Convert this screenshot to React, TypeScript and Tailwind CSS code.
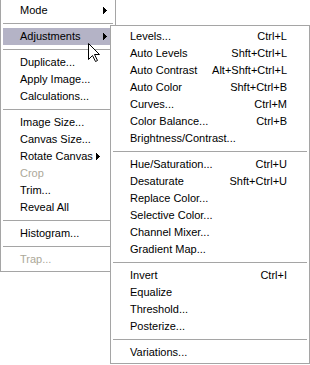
import React from "react";

type Item =
  | { sep: true }
  | { label: string; shortcut?: string; arrow?: "far" | "near"; disabled?: boolean; active?: boolean; sep?: false };

const mainItems: Item[] = [
  { label: "Mode", arrow: "far" },
  { sep: true },
  { label: "Adjustments", arrow: "far", active: true },
  { sep: true },
  { label: "Duplicate..." },
  { label: "Apply Image..." },
  { label: "Calculations..." },
  { sep: true },
  { label: "Image Size..." },
  { label: "Canvas Size..." },
  { label: "Rotate Canvas", arrow: "near" },
  { label: "Crop", disabled: true },
  { label: "Trim..." },
  { label: "Reveal All" },
  { sep: true },
  { label: "Histogram..." },
  { sep: true },
  { label: "Trap...", disabled: true },
];

const subItems: Item[] = [
  { label: "Levels...", shortcut: "Ctrl+L" },
  { label: "Auto Levels", shortcut: "Shft+Ctrl+L" },
  { label: "Auto Contrast", shortcut: "Alt+Shft+Ctrl+L" },
  { label: "Auto Color", shortcut: "Shft+Ctrl+B" },
  { label: "Curves...", shortcut: "Ctrl+M" },
  { label: "Color Balance...", shortcut: "Ctrl+B" },
  { label: "Brightness/Contrast..." },
  { sep: true },
  { label: "Hue/Saturation...", shortcut: "Ctrl+U" },
  { label: "Desaturate", shortcut: "Shft+Ctrl+U" },
  { label: "Replace Color..." },
  { label: "Selective Color..." },
  { label: "Channel Mixer..." },
  { label: "Gradient Map..." },
  { sep: true },
  { label: "Invert", shortcut: "Ctrl+I" },
  { label: "Equalize" },
  { label: "Threshold..." },
  { label: "Posterize..." },
  { sep: true },
  { label: "Variations..." },
];

function Arrow() {
  return (
    <svg width="4" height="7" viewBox="0 0 4 7" shapeRendering="crispEdges" className="block">
      <rect x="0" y="0" width="1" height="7" fill="#000" />
      <rect x="1" y="1" width="1" height="5" fill="#000" />
      <rect x="2" y="2" width="1" height="3" fill="#000" />
      <rect x="3" y="3" width="1" height="1" fill="#000" />
    </svg>
  );
}

function Separator() {
  return (
    <div className="h-[9px] flex items-center">
      <div className="h-px w-full bg-[#a5a5a5]" />
    </div>
  );
}

function Row({ item }: { item: Extract<Item, { label: string }> }) {
  return (
    <div
      className={`h-[17px] flex items-center pl-[17px] leading-[17px] whitespace-nowrap ${
        item.active ? "bg-[#b4b3c6]" : ""
      } ${item.disabled ? "text-[#aca899]" : "text-black"}`}
    >
      <span>{item.label}</span>
      {item.shortcut && <span className="ml-auto pr-[20px]">{item.shortcut}</span>}
      {item.arrow === "far" && (
        <span className="ml-auto mr-[6px]">
          <Arrow />
        </span>
      )}
      {item.arrow === "near" && (
        <span className="ml-[3px]">
          <Arrow />
        </span>
      )}
    </div>
  );
}

function Cursor() {
  return (
    <svg width="13" height="20" viewBox="0 0 13 20" className="absolute left-[88px] top-[43px]">
      <path
        d="M0.5,0.5 L0.5,16.5 L4.5,12.5 L7.5,18.5 L9.5,17.5 L6.5,11.5 L11.5,11.5 Z"
        fill="#fff"
        stroke="#000"
        strokeWidth="1"
        strokeLinejoin="miter"
      />
    </svg>
  );
}

export default function App() {
  return (
    <div className="relative w-[310px] h-[365px] bg-white overflow-hidden font-['Liberation_Sans',Arial,sans-serif] text-[11px]">
      <div className="-mt-px w-[116px] border border-[#a5a5a5] bg-white px-[2px] pt-[2px] pb-[3px]">
        {mainItems.map((it, i) => (it.sep ? <Separator key={i} /> : <Row key={i} item={it} />))}
      </div>
      <Cursor />
      <div className="absolute left-[110px] top-[25px] w-[200px] h-[339px] border border-[#a5a5a5] bg-white p-[2px]">
        {subItems.map((it, i) => (it.sep ? <Separator key={i} /> : <Row key={i} item={it} />))}
      </div>
    </div>
  );
}
